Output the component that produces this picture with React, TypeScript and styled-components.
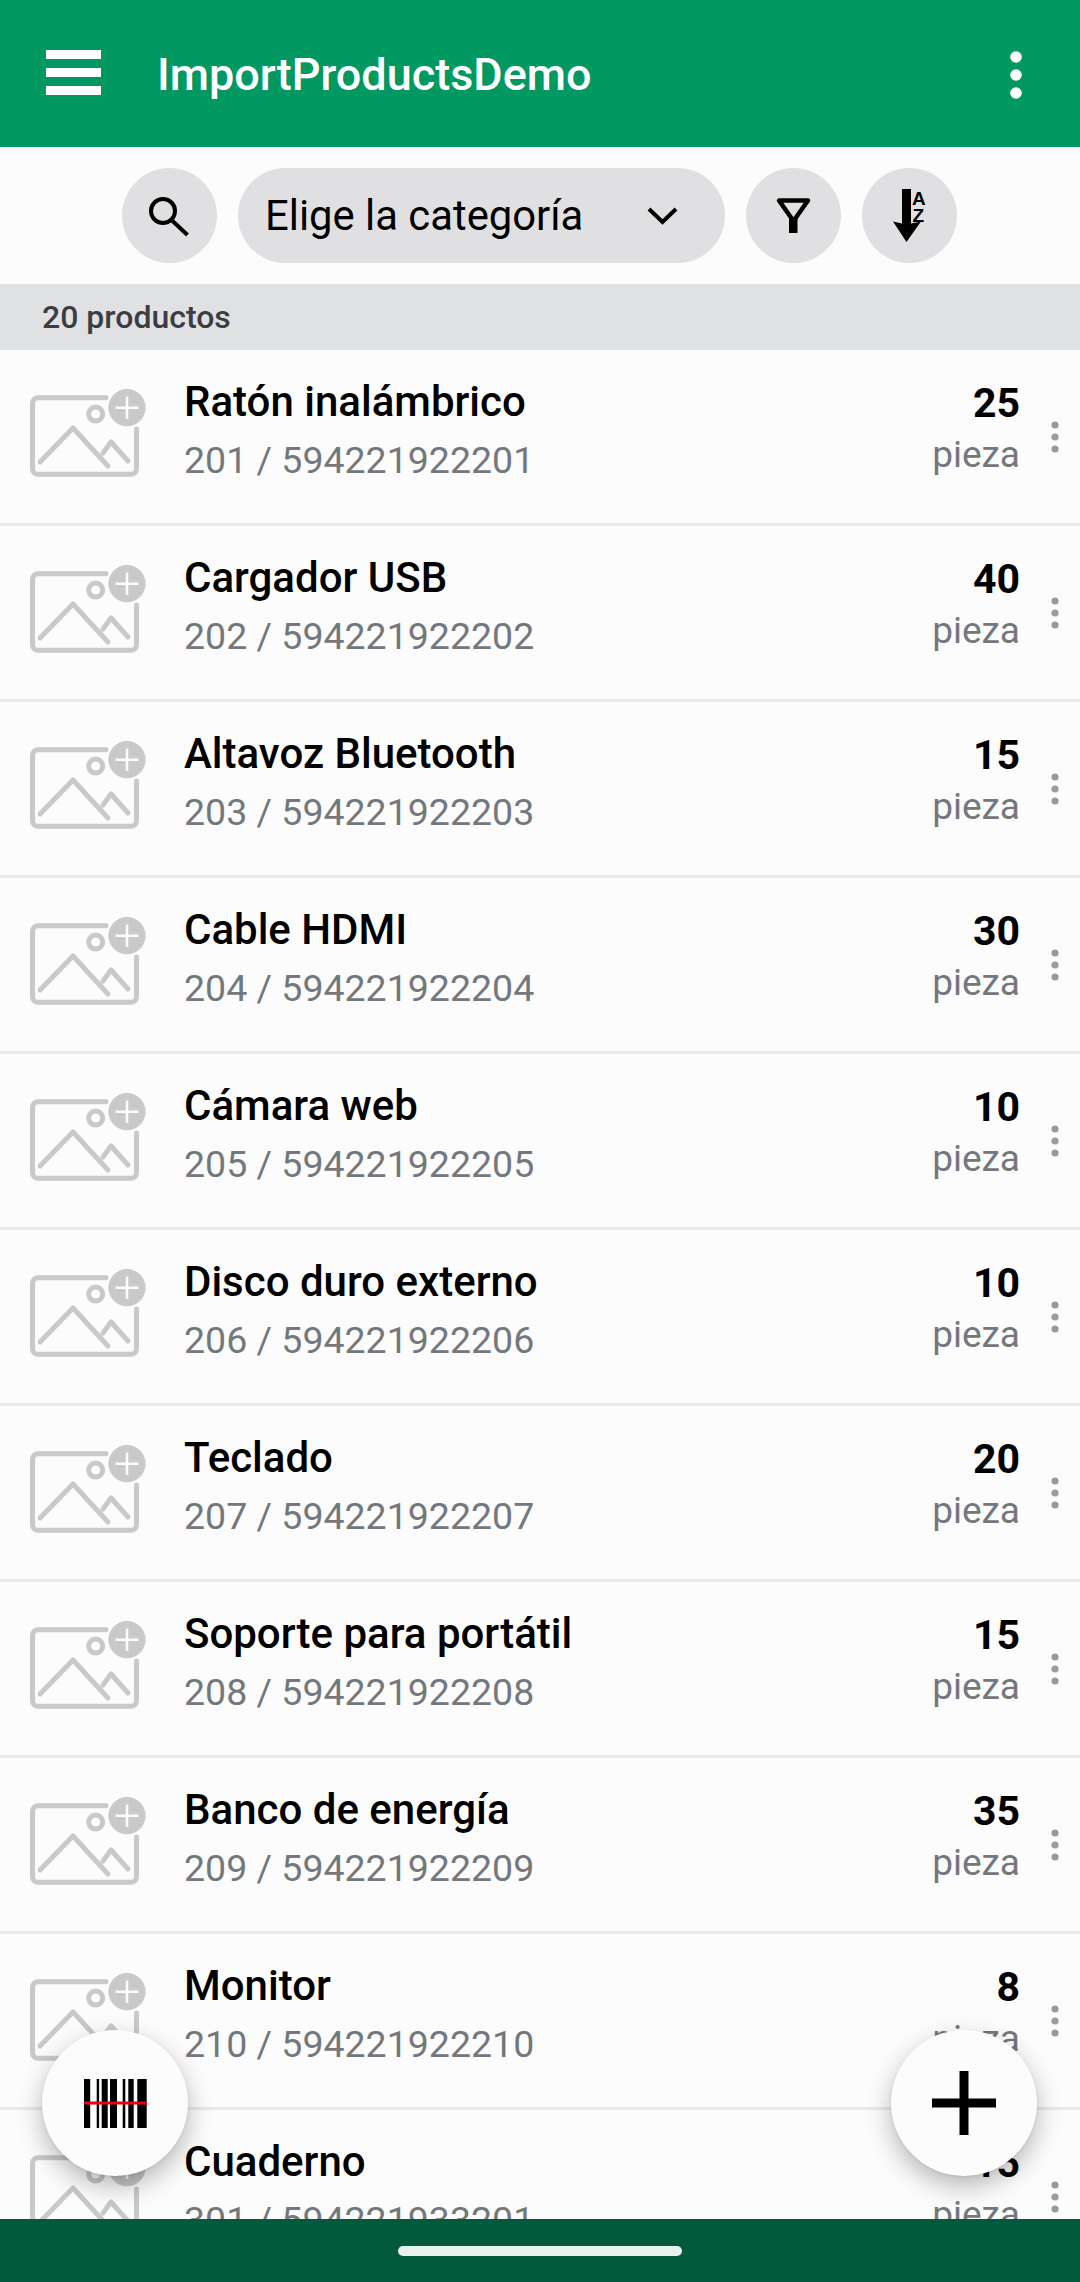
import React from "react";
import styled, { createGlobalStyle } from "styled-components";

const Global = createGlobalStyle`
  html, body { margin: 0; padding: 0; background: #fcfcfc; }
  body { font-family: Roboto, "Noto Sans", sans-serif; }
  * { box-sizing: border-box; }
`;

const Page = styled.div`
  position: relative;
  width: 1080px;
  height: 2282px;
  display: flex;
  flex-direction: column;
  overflow: hidden;
  background: #fcfcfc;
`;

const AppBar = styled.header`
  height: 147px;
  flex: none;
  background: #019961;
  display: flex;
  align-items: flex-start;
  padding: 50px 46px 0 46px;
  color: #fff;
`;

const Hamburger = styled.svg`
  width: 55px;
  height: 45px;
  flex: none;
  display: block;
`;

const AppTitle = styled.h1`
  margin: 0 0 0 56px;
  font-size: 45px;
  font-weight: 500;
  line-height: 50px;
  flex: 1;
`;

const Kebab = styled.svg`
  width: 14px;
  height: 50px;
  margin: 0 11px 0 0;
  flex: none;
  display: block;
`;

const Toolbar = styled.div`
  height: 137px;
  flex: none;
  display: flex;
  align-items: center;
  justify-content: center;
  gap: 21px;
  padding-right: 1px;
`;

const RoundButton = styled.button`
  width: 95px;
  height: 95px;
  border: 0;
  padding: 0;
  border-radius: 50%;
  background: #e0e0e2;
  display: flex;
  align-items: center;
  justify-content: center;
  flex: none;
`;

const Select = styled.div`
  width: 487px;
  height: 95px;
  border-radius: 48px;
  background: #e0e0e2;
  display: flex;
  align-items: center;
  justify-content: space-between;
  padding: 0 47px 0 27px;
  font-size: 41.8px;
  color: #000;
  flex: none;
`;

const CountBand = styled.div`
  height: 66px;
  flex: none;
  background: #e0e1e3;
  color: #3c3c44;
  font-size: 32px;
  font-weight: 500;
  line-height: 66px;
  padding-left: 42px;
`;

const List = styled.div`
  flex: 1;
  min-height: 0;
  overflow: hidden;
`;

const Row = styled.div`
  height: 176px;
  border-bottom: 3px solid #e9e9e9;
  display: flex;
  align-items: flex-start;
  padding: 26px 0 0 28px;
`;

const Thumb = styled.svg`
  width: 120px;
  height: 92px;
  margin-top: 11px;
  flex: none;
  display: block;
`;

const Info = styled.div`
  margin-left: 36px;
  flex: 1;
  min-width: 0;
`;

const Name = styled.div`
  font-size: 42px;
  font-weight: 500;
  line-height: 50px;
  margin-top: 1px;
  color: #000;
  white-space: nowrap;
`;

const Code = styled.div`
  font-size: 37.5px;
  font-weight: 400;
  line-height: 50px;
  margin-top: 8px;
  color: #73787c;
  white-space: nowrap;
`;

const Stock = styled.div`
  width: 120px;
  text-align: right;
  flex: none;
`;

const Qty = styled.div`
  font-size: 41px;
  font-weight: 700;
  line-height: 50px;
  margin-top: 2px;
  color: #000;
`;

const Unit = styled.div`
  font-size: 37px;
  line-height: 50px;
  margin-top: 2px;
  color: #73787c;
`;

const RowMenu = styled.svg`
  width: 8px;
  height: 32px;
  margin: 45px 21px 0 31px;
  flex: none;
  display: block;
`;

const NavBar = styled.div`
  height: 63px;
  flex: none;
  background: #015a3c;
  display: flex;
  justify-content: center;
  padding-top: 27px;
`;

const NavPill = styled.div`
  width: 284px;
  height: 10px;
  border-radius: 5px;
  background: #e9f1ee;
`;

const Fab = styled.button<{ $side: "left" | "right" }>`
  position: absolute;
  top: 2030px;
  ${(p) => (p.$side === "left" ? "left: 42px;" : "right: 43px;")}
  width: 146px;
  height: 146px;
  border: 0;
  padding: 0;
  border-radius: 50%;
  background: #fcfcfc;
  box-shadow: 0 10px 26px rgba(0, 0, 0, 0.28), 0 1px 3px rgba(0, 0, 0, 0.08);
  display: flex;
  align-items: center;
  justify-content: center;
`;

const items = [
  ["Ratón inalámbrico", "201 / 594221922201", "25"],
  ["Cargador USB", "202 / 594221922202", "40"],
  ["Altavoz Bluetooth", "203 / 594221922203", "15"],
  ["Cable HDMI", "204 / 594221922204", "30"],
  ["Cámara web", "205 / 594221922205", "10"],
  ["Disco duro externo", "206 / 594221922206", "10"],
  ["Teclado", "207 / 594221922207", "20"],
  ["Soporte para portátil", "208 / 594221922208", "15"],
  ["Banco de energía", "209 / 594221922209", "35"],
  ["Monitor", "210 / 594221922210", "8"],
  ["Cuaderno", "301 / 594221933201", "15"],
];

const ImageAdd = () => (
  <Thumb viewBox="0 0 120 92">
    <g fill="none" stroke="#c9c9c9" strokeWidth="5" strokeLinecap="round" strokeLinejoin="round">
      <path d="M78 10.7H10a5.5 5.5 0 0 0-5.5 5.5V82a5.3 5.3 0 0 0 5.3 5.3H103a5.5 5.5 0 0 0 5.5-5.5V42" />
      <circle cx="67.7" cy="27" r="7" />
      <path d="M12 75 45 41 80 79" />
      <path d="M75 66 83 55 100 74" />
    </g>
    <circle cx="99" cy="20.7" r="18.6" fill="#c9c9c9" />
    <path d="M99 9.5v22.4M87.5 20.7h23" stroke="#fcfcfc" strokeWidth="2.6" />
  </Thumb>
);

const Barcode = () => (
  <svg width="63" height="49" viewBox="0 0 63 49">
    <path
      d="M0 0h6.2v49H0zM12.7 0h2.4v49h-2.4zM17.7 0h6v49h-6zM26 0h7v49h-7zM38.7 0h2.6v49h-2.6zM44.3 0h5.4v49h-5.4zM53.3 0h9.4v49h-9.4z"
      fill="#000"
    />
    <rect x="0" y="22.5" width="63" height="3" fill="#e8000f" />
  </svg>
);

export default function App() {
  return (
    <Page>
      <Global />
      <AppBar>
        <Hamburger viewBox="0 0 55 45">
          <path d="M0 0h55v9H0zM0 18h55v9H0zM0 36h55v9H0z" fill="#fff" />
        </Hamburger>
        <AppTitle>ImportProductsDemo</AppTitle>
        <Kebab viewBox="0 0 14 50">
          <circle cx="7" cy="7" r="5.8" fill="#fff" />
          <circle cx="7" cy="25" r="5.8" fill="#fff" />
          <circle cx="7" cy="43" r="5.8" fill="#fff" />
        </Kebab>
      </AppBar>

      <Toolbar>
        <RoundButton aria-label="Buscar">
          <svg width="95" height="95" viewBox="0 0 95 95">
            <circle cx="41" cy="43" r="12" fill="none" stroke="#000" strokeWidth="4" />
            <path d="M49.5 52 65.5 67" stroke="#000" strokeWidth="4" />
          </svg>
        </RoundButton>
        <Select>
          <span>Elige la categoría</span>
          <svg width="31" height="18" viewBox="0 0 31 18">
            <path d="M2 2 15.5 15 29 2" fill="none" stroke="#000" strokeWidth="4" />
          </svg>
        </Select>
        <RoundButton aria-label="Filtrar">
          <svg width="95" height="95" viewBox="0 0 95 95">
            <path d="M33 32.5h29L47.5 53z" fill="none" stroke="#000" strokeWidth="4.5" strokeLinejoin="round" />
            <path d="M43 50h8.5v15h-8.5z" fill="#000" />
          </svg>
        </RoundButton>
        <RoundButton aria-label="Ordenar">
          <svg width="95" height="95" viewBox="0 0 95 95">
            <path d="M40 21h9v34.5l10-2L44.5 74 31 53.5l9 2z" fill="#000" />
            <text x="50" y="36.5" fontFamily="Liberation Sans" fontSize="19" fontWeight="700" fill="#000">A</text>
            <text x="50.5" y="54" fontFamily="Liberation Sans" fontSize="19" fontWeight="700" fill="#000">Z</text>
          </svg>
        </RoundButton>
      </Toolbar>

      <CountBand>20 productos</CountBand>

      <List>
        {items.map(([name, code, qty]) => (
          <Row key={code}>
            <ImageAdd />
            <Info>
              <Name>{name}</Name>
              <Code>{code}</Code>
            </Info>
            <Stock>
              <Qty>{qty}</Qty>
              <Unit>pieza</Unit>
            </Stock>
            <RowMenu viewBox="0 0 8 32">
              <circle cx="4" cy="4" r="3.6" fill="#9a9a9a" />
              <circle cx="4" cy="16" r="3.6" fill="#9a9a9a" />
              <circle cx="4" cy="28" r="3.6" fill="#9a9a9a" />
            </RowMenu>
          </Row>
        ))}
      </List>

      <NavBar>
        <NavPill />
      </NavBar>

      <Fab $side="left" aria-label="Escanear">
        <Barcode />
      </Fab>
      <Fab $side="right" aria-label="Añadir">
        <svg width="64" height="64" viewBox="0 0 64 64">
          <path d="M27.5 0h9v27.5H64v9H36.5V64h-9V36.5H0v-9h27.5z" fill="#000" />
        </svg>
      </Fab>
    </Page>
  );
}
